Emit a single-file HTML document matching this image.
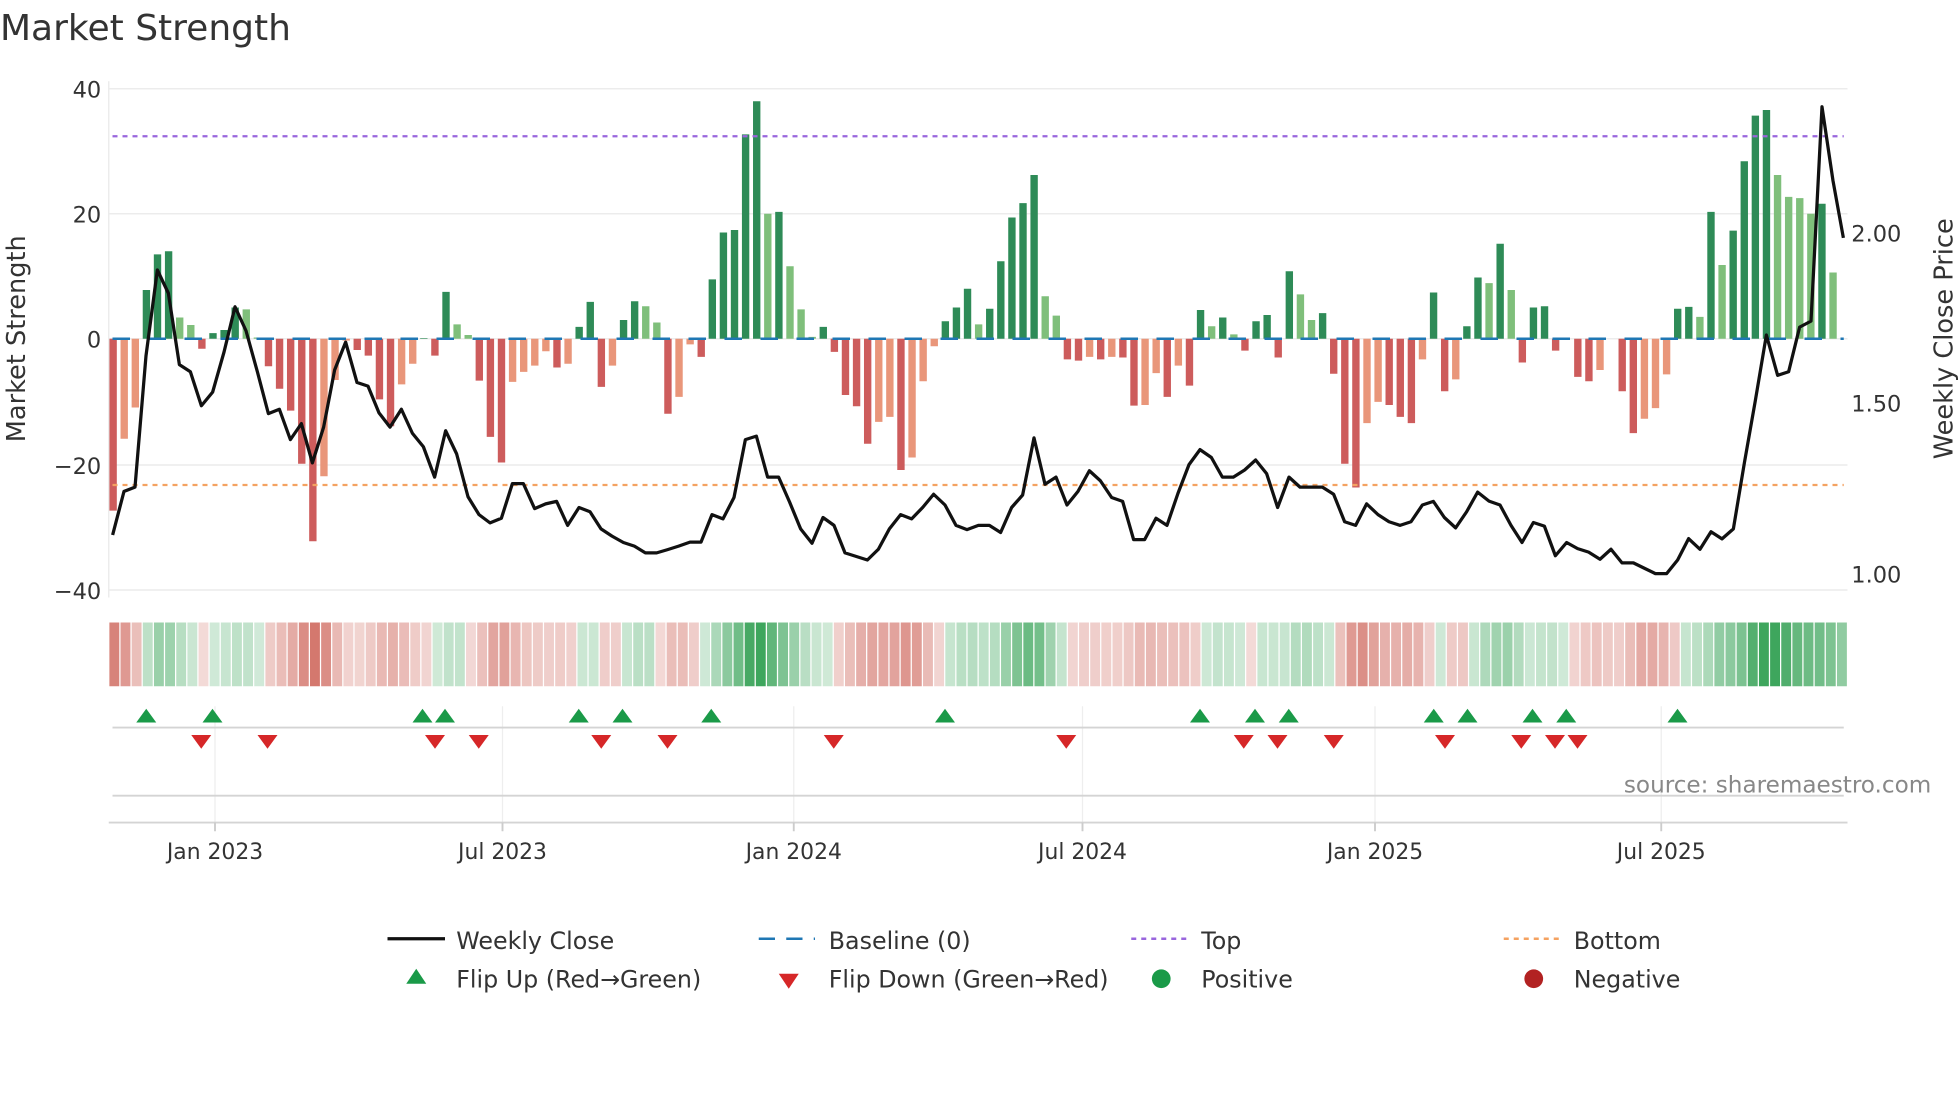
<!DOCTYPE html>
<html><head><meta charset="utf-8"><style>
html,body{margin:0;padding:0;background:#fff;width:1960px;height:1102px;overflow:hidden}
svg text{font-family:"DejaVu Sans","Liberation Sans",sans-serif;fill:#333}
</style></head><body>
<svg id="c" width="1960" height="1102" viewBox="0 0 1568 881.6" xmlns="http://www.w3.org/2000/svg">
<text x="0" y="32" font-size="28.8" fill="#333">Market Strength</text>
<g stroke="#ececec" stroke-width="1.2">
<line x1="87" y1="71" x2="1478" y2="71"/><line x1="87" y1="171" x2="1478" y2="171"/>
<line x1="87" y1="271" x2="1478" y2="271"/><line x1="87" y1="372" x2="1478" y2="372"/>
<line x1="87" y1="472" x2="1478" y2="472"/><line x1="87" y1="65" x2="87" y2="478"/>
</g>
<g font-size="18" text-anchor="end">
<text x="81" y="78">40</text><text x="81" y="178">20</text><text x="81" y="278">0</text>
<text x="81" y="379">−20</text><text x="81" y="479">−40</text>
</g>
<g font-size="18">
<text x="1481" y="193">2.00</text><text x="1481" y="329">1.50</text><text x="1481" y="466">1.00</text>
</g>
<text transform="translate(20,271) rotate(-90)" font-size="20.5" text-anchor="middle">Market Strength</text>
<text transform="translate(1562,271) rotate(-90)" font-size="20.5" text-anchor="middle">Weekly Close Price</text>
<g id="bars"></g>
<line x1="90" y1="271" x2="1475" y2="271" stroke="#1f77b4" stroke-width="2" stroke-dasharray="14,14.8"/>
<line x1="90" y1="109" x2="1475" y2="109" stroke="#9966dd" stroke-width="1.8" stroke-dasharray="4,4"/>
<line x1="90" y1="388" x2="1475" y2="388" stroke="#f4a261" stroke-width="1.8" stroke-dasharray="4,4"/>
<polyline id="price" fill="none" stroke="#111" stroke-width="2.6" stroke-linejoin="round"/>
<g id="strip"></g>
<g stroke="#eeeeee" stroke-width="1">
<line x1="172" y1="565" x2="172" y2="658"/><line x1="402" y1="565" x2="402" y2="658"/>
<line x1="635" y1="565" x2="635" y2="658"/><line x1="866" y1="565" x2="866" y2="658"/>
<line x1="1100" y1="565" x2="1100" y2="658"/><line x1="1329" y1="565" x2="1329" y2="658"/>
</g>
<line x1="90" y1="582" x2="1475" y2="582" stroke="#d4d4d4" stroke-width="1.5"/>
<line x1="90" y1="636.5" x2="1475" y2="636.5" stroke="#d4d4d4" stroke-width="1.5"/>
<line x1="87" y1="658" x2="1478" y2="658" stroke="#d4d4d4" stroke-width="1.5"/>
<g stroke="#ccc" stroke-width="1.5">
<line x1="172" y1="658" x2="172" y2="665"/><line x1="402" y1="658" x2="402" y2="665"/>
<line x1="635" y1="658" x2="635" y2="665"/><line x1="866" y1="658" x2="866" y2="665"/>
<line x1="1100" y1="658" x2="1100" y2="665"/><line x1="1329" y1="658" x2="1329" y2="665"/>
</g>
<g id="tri"></g>
<text x="1545" y="634" font-size="18.5" text-anchor="end" style="fill:#888">source: sharemaestro.com</text>
<g font-size="17.5" text-anchor="middle">
<text x="172" y="687">Jan 2023</text><text x="402" y="687">Jul 2023</text>
<text x="635" y="687">Jan 2024</text><text x="866" y="687">Jul 2024</text>
<text x="1100" y="687">Jan 2025</text><text x="1329" y="687">Jul 2025</text>
</g>
<g font-size="19">
<line x1="310" y1="751" x2="356" y2="751" stroke="#111" stroke-width="2.6"/>
<text x="365" y="759">Weekly Close</text>
<line x1="607" y1="751" x2="652" y2="751" stroke="#1f77b4" stroke-width="2" stroke-dasharray="13,9"/>
<text x="663" y="759">Baseline (0)</text>
<line x1="905" y1="751" x2="950" y2="751" stroke="#9966dd" stroke-width="2" stroke-dasharray="4,4"/>
<text x="961" y="759">Top</text>
<line x1="1203" y1="751" x2="1248" y2="751" stroke="#f4a261" stroke-width="2" stroke-dasharray="4,4"/>
<text x="1259" y="759">Bottom</text>
<polygon points="333,775 325,787 341,787" fill="#1a9a48"/>
<text x="365" y="790">Flip Up (Red→Green)</text>
<polygon points="623,779 639,779 631,791" fill="#d62728"/>
<text x="663" y="790">Flip Down (Green→Red)</text>
<circle cx="929" cy="783" r="7.5" fill="#1a9a48"/>
<text x="961" y="790">Positive</text>
<circle cx="1227" cy="783" r="7.5" fill="#b22222"/>
<text x="1259" y="790">Negative</text>
</g>
</svg>
<script>
var NS="http://www.w3.org/2000/svg";
var B=[[-27.5,'D'],[-16,'L'],[-11,'L'],[7.8,'D'],[13.5,'D'],[14,'D'],[3.4,'L'],[2.2,'L'],[-1.6,'D'],[0.9,'D'],
[1.4,'D'],[5,'D'],[4.7,'L'],[0.2,'L'],[-4.4,'D'],[-8,'D'],[-11.5,'D'],[-20,'D'],[-32.4,'D'],[-22,'L'],
[-6.6,'L'],[-0.3,'L'],[-1.8,'D'],[-2.7,'D'],[-9.7,'D'],[-14,'D'],[-7.3,'L'],[-4,'L'],[0.1,'D'],[-2.7,'D'],
[7.5,'D'],[2.3,'L'],[0.6,'L'],[-6.7,'D'],[-15.7,'D'],[-19.8,'D'],[-6.9,'L'],[-5.3,'L'],[-4.3,'L'],[-2,'L'],
[-4.6,'D'],[-4,'L'],[1.9,'D'],[5.9,'D'],[-7.7,'D'],[-4.3,'L'],[3,'D'],[6,'D'],[5.2,'L'],[2.6,'L'],
[-12,'D'],[-9.3,'L'],[-0.9,'L'],[-2.9,'D'],[9.5,'D'],[17,'D'],[17.4,'D'],[32.7,'D'],[38,'D'],[20,'L'],
[20.3,'D'],[11.6,'L'],[4.7,'L'],[0.3,'L'],[1.9,'D'],[-2.1,'D'],[-9,'D'],[-10.8,'D'],[-16.8,'D'],[-13.3,'L'],
[-12.5,'L'],[-21,'D'],[-19,'L'],[-6.8,'L'],[-1.2,'L'],[2.8,'D'],[5,'D'],[8,'D'],[2.3,'L'],[4.8,'D'],
[12.4,'D'],[19.4,'D'],[21.7,'D'],[26.2,'D'],[6.8,'L'],[3.7,'L'],[-3.3,'D'],[-3.5,'D'],[-2.9,'L'],[-3.3,'D'],
[-2.9,'L'],[-3,'D'],[-10.7,'D'],[-10.6,'L'],[-5.5,'L'],[-9.3,'D'],[-4.3,'L'],[-7.5,'D'],[4.6,'D'],[2,'L'],
[3.4,'D'],[0.7,'L'],[-1.9,'D'],[2.8,'D'],[3.8,'D'],[-3,'D'],[10.8,'D'],[7.1,'L'],[3,'L'],[4.1,'D'],
[-5.6,'D'],[-20,'D'],[-23.8,'D'],[-13.5,'L'],[-10.1,'L'],[-10.6,'D'],[-12.5,'D'],[-13.5,'D'],[-3.3,'L'],[7.4,'D'],
[-8.4,'D'],[-6.5,'L'],[2,'D'],[9.8,'D'],[8.9,'L'],[15.2,'D'],[7.8,'L'],[-3.8,'D'],[5,'D'],[5.2,'D'],
[-1.9,'D'],[0,'L'],[-6.1,'D'],[-6.8,'D'],[-5,'L'],[0,'L'],[-8.4,'D'],[-15.1,'D'],[-12.8,'L'],[-11.1,'L'],
[-5.7,'L'],[4.8,'D'],[5.1,'D'],[3.5,'L'],[20.3,'D'],[11.8,'L'],[17.3,'D'],[28.4,'D'],[35.7,'D'],[36.6,'D'],
[26.2,'L'],[22.7,'L'],[22.5,'L'],[20,'L'],[21.6,'D'],[10.6,'L']];
var x0=90.5,dx=8.877,bw=5.9,sdx=1391/B.length;
var gb=document.getElementById('bars'),gs=document.getElementById('strip');
function rect(g,x,y,w,h,f,o){var r=document.createElementNS(NS,'rect');r.setAttribute('x',x);r.setAttribute('y',y);r.setAttribute('width',w);r.setAttribute('height',h);r.setAttribute('fill',f);if(o!=null)r.setAttribute('fill-opacity',o);g.appendChild(r);}
for(var i=0;i<B.length;i++){var v=B[i][0],t=B[i][1],x=x0+i*dx;
 var col=v>=0?(t=='D'?'#2e8b57':'#7fbf7b'):(t=='D'?'#cd5c5c':'#e9967a');
 var y=v>=0?271-v*5:271,h=Math.abs(v)*5;if(h>0.3)rect(gb,x-bw/2,y,bw,h,col);
 var s=0,n=0;for(var k=Math.max(0,i-1);k<=Math.min(B.length-1,i+1);k++){s+=B[k][0]*(k==i?2:1);n+=(k==i?2:1);}s/=n;
 var a=0.22+0.7*Math.min(Math.abs(s)/32,1);
 rect(gs,87+i*sdx+0.5,498,sdx-1,51,s>=0?'#2e9e4f':'#c0392b',a*(s>=0?1:0.85));
}
var Z=[[100,[38,1302,72,1180,105,1168,138,800,172,560,205,625,238,825,271,845,304,940,338,902,372,790,405,663,438,730,472,845,505,962,538,950,571,1035,604,990,637,1100,671,1000,704,840,737,762,771,875,804,885,837,960,870,1000,904,950,937,1017,970,1055,1004,1140,1037,1010,1070,1075,1104,1195,1137,1245,1170,1268,1204,1255,1237,1158,1270,1158,1304,1228,1337,1215]],
[540,[50,1208,83,1275,117,1225,150,1237,183,1285,216,1305,250,1323,283,1333,316,1352,350,1352,383,1343,416,1333,450,1322,483,1322,516,1245,549,1257,582,1197,616,1035,649,1025,683,1140,716,1140,749,1210,782,1285,816,1325,849,1253,882,1275,915,1352,948,1362,982,1372,1015,1342,1048,1285,1082,1245,1115,1257,1148,1225,1181,1188,1215,1218,1248,1275,1281,1287,1315,1275,1348,1275]],
[980,[62,1295,95,1225,128,1190,162,1030,195,1160,228,1140,261,1218,294,1180,328,1122,361,1150,395,1197,428,1208,461,1315,494,1315,528,1255,561,1275,594,1185,627,1105,660,1063,694,1085,727,1140,760,1140,794,1120,827,1092,860,1130,893,1225,927,1140,960,1168,994,1168,1027,1168,1061,1188,1094,1265,1127,1275,1160,1215,1194,1245,1227,1265,1260,1275,1293,1265,1327,1218]],
[1420,[40,1208,73,1253,107,1282,140,1237,173,1182,207,1207,240,1218,273,1275,306,1323,340,1267,373,1277,406,1360,440,1323,473,1340,506,1350,540,1370,573,1342,606,1380,640,1380,673,1395,706,1410,740,1410,773,1372,806,1312,840,1342,873,1293,906,1313,940,1285,973,1100,1006,925,1039,742,1073,855,1106,845,1139,720,1173,703,1206,103,1239,310,1270,470]]];
var pts=[];Z.forEach(function(z){var o=z[0],a=z[1];for(var j=0;j<a.length;j+=2){var X=(o+a[j]/3)/1.25,Y=(70+a[j+1]/2.8)/1.25;pts.push(X.toFixed(1)+','+Y.toFixed(1));}});
document.getElementById('price').setAttribute('points',pts.join(' '));
var gt=document.getElementById('tri');
[117,170,338,356,463,498,569,756,960,1004,1031,1147,1174,1226,1253,1342].forEach(function(x){var p=document.createElementNS(NS,'polygon');p.setAttribute('points',(x)+',567 '+(x-8)+',578 '+(x+8)+',578');p.setAttribute('fill','#1a9a48');gt.appendChild(p);});
[161,214,348,383,481,534,667,853,995,1022,1067,1156,1217,1244,1262].forEach(function(x){var p=document.createElementNS(NS,'polygon');p.setAttribute('points',(x-8)+',588 '+(x+8)+',588 '+x+',599');p.setAttribute('fill','#d62728');gt.appendChild(p);});
</script>
</body></html>
